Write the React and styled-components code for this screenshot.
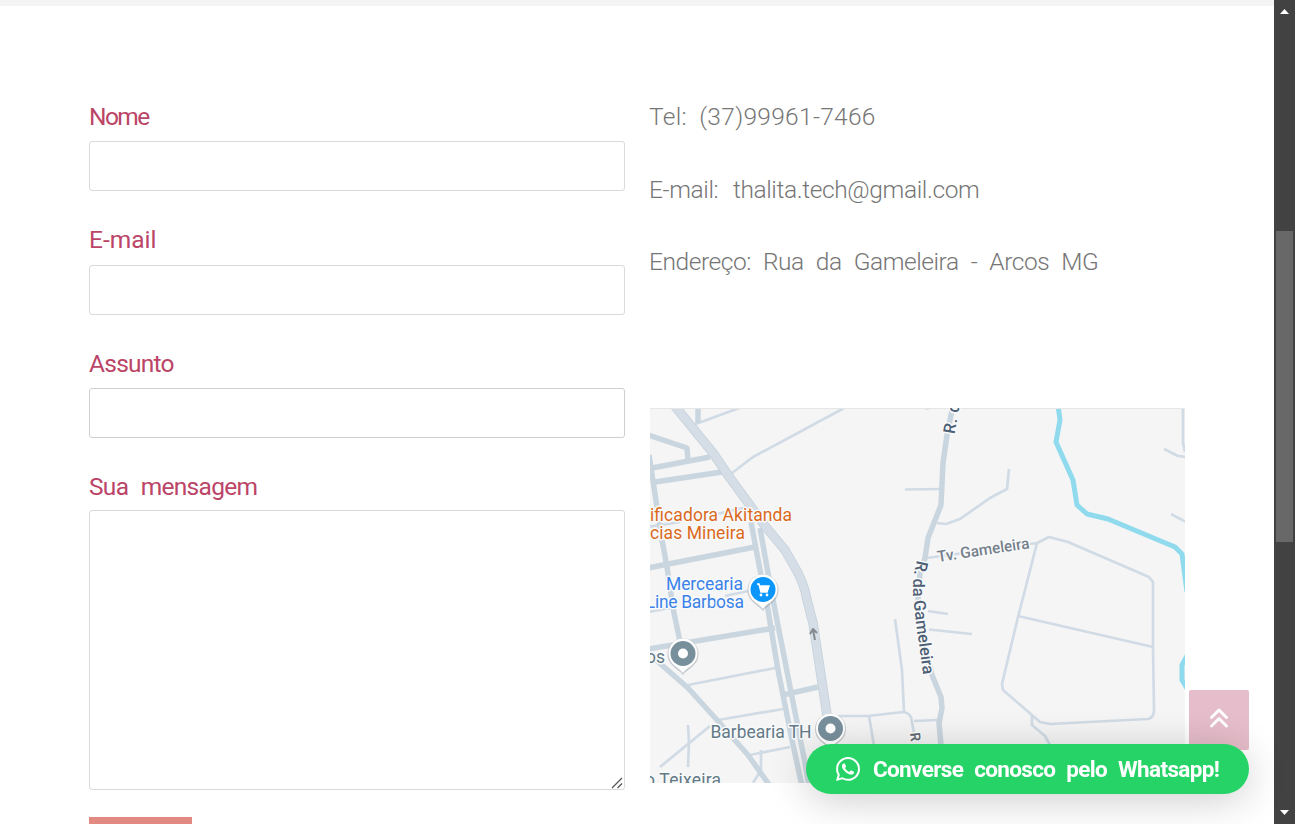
import React from "react";
import styled, { createGlobalStyle } from "styled-components";
import { FaWhatsapp } from "react-icons/fa";

const GlobalStyle = createGlobalStyle`
  *, *::before, *::after { box-sizing: border-box; }
  body { margin: 0; background: #fff; overflow: hidden; }
`;

const displayFont = `Roboto, "Liberation Sans", sans-serif`;

const Page = styled.div`
  display: flex;
  width: 100%;
  height: 824px;
  overflow: hidden;
  background: #fff;
`;

const Content = styled.main`
  flex: 1;
  min-width: 0;
  height: 824px;
  overflow: hidden;
`;

const TopStrip = styled.div`
  height: 6px;
  background: #f4f4f4;
`;

const Columns = styled.div`
  display: grid;
  grid-template-columns: 536px 535px;
  column-gap: 25px;
  align-items: start;
  padding: 92px 0 0 89px;
`;

const Form = styled.form`
  display: flex;
  flex-direction: column;
  align-items: flex-start;
`;

const Field = styled.div`
  position: relative;
  display: flex;
  flex-direction: column;
  width: 100%;
  height: ${(p) => p.$height}px;
`;

const Label = styled.label`
  height: ${(p) => p.$height || 43}px;
  font: 400 24.5px/${(p) => p.$line || 37}px ${displayFont};
  letter-spacing: ${(p) => p.$tracking}px;
  word-spacing: ${(p) => p.$gap || 0}px;
  color: #bb4567;
  white-space: nowrap;
`;

const Input = styled.input`
  width: 100%;
  height: 50px;
  border: 1px solid ${(p) => p.$border || "#dadada"};
  border-radius: 3px;
  background: #fff;
  outline: none;
`;

const TextArea = styled.textarea`
  display: block;
  width: 100%;
  height: 280px;
  border: 1px solid #dadada;
  border-radius: 3px;
  background: #fff;
  outline: none;
  resize: none;
`;

const ResizeGrip = styled.svg`
  position: absolute;
  left: 522px;
  top: 309px;
  width: 12px;
  height: 12px;
  stroke: #555;
  stroke-width: 1.3;
`;

const Submit = styled.button`
  width: 103px;
  height: 50px;
  border: 0;
  background: #e28a82;
`;

const Contact = styled.section`
  display: flex;
  flex-direction: column;
`;

const Line = styled.p`
  margin: 0 0 0 -1px;
  height: 72.5px;
  font: 300 24.5px/37px ${displayFont};
  letter-spacing: ${(p) => p.$tracking}px;
  word-spacing: ${(p) => p.$gap}px;
  color: #767676;
  white-space: nowrap;
`;

const MapImage = styled.svg`
  display: block;
  width: 535px;
  height: 375px;
  margin-top: 92.5px;
  background: #f5f5f5;
  font-family: Roboto, sans-serif;
`;

const ScrollTrack = styled.div`
  display: flex;
  flex-direction: column;
  align-items: center;
  width: 21px;
  height: 824px;
  background: #424242;
`;

const ScrollArrow = styled.svg`
  width: 9px;
  height: 5px;
  margin: ${(p) => (p.$up ? "9px 0 217px" : "268px 0 0")};
  fill: #fff;
`;

const ScrollThumb = styled.div`
  width: 17px;
  height: 311px;
  background: #686868;
`;

const ToTop = styled.a`
  position: fixed;
  left: 1189px;
  top: 690px;
  display: grid;
  place-items: center;
  width: 60px;
  height: 60px;
  padding-bottom: 4px;
  border-radius: 2px;
  background: #e6bdca;
`;

const WhatsAppButton = styled.a`
  position: fixed;
  left: 806px;
  top: 744px;
  display: flex;
  align-items: center;
  gap: 13px;
  width: 443px;
  height: 50px;
  padding-left: 30px;
  border-radius: 25px;
  background: #25d366;
  color: #fff;
  box-shadow: 0 6px 40px rgba(0, 0, 0, 0.2);
  font: 700 22.5px/50px ${displayFont};
  letter-spacing: -0.65px;
  word-spacing: 6px;
  white-space: nowrap;

  svg { width: 24px; height: 28px; flex: none; }
`;

const ButtonText = styled.span`
  height: 50px;
`;

const roads = [
  "M698 404V423", "M648 435L687 448L688 460", "M652 468L710 457", "M655 482L722 472",
  "M649 455L657 507L662 540L667 567L673 608L680 642", "M648 568L755 547",
  "M751 522L760 570L768 610L778 670L792 740L802 786",
  "M760 528L768 573L775 610L792 697L805 763L809 786",
  "M648 649L775 628", "M655 659L688 688L717 720L748 755L770 786", "M783 695L818 687",
  "M953 405L947 435L943 463L941 505L928 538L925 558L920 573L918 600L923 640L932 675L941 697L942 708L939 723L941 745",
];

const lanes = [
  "M693 425L742 407", "M846 407L753 457L732 473", "M648 527L680 522", "M717 514L752 506", "M725 596L748 591", "M648 612L670 608",
  "M688 685L775 668", "M718 720L783 709", "M750 755L790 747", "M688 725L689 742L688 767", "M660 767L710 726",
  "M761 750V770L753 783", "M838 716H868L903 712Q909 713 911 717L914 733", "M869 716L874 746",
  "M895 619L902 670L904 712", "M914 721L938 720", "M905 489.500L940 489", "M1009 469L1007 489L990 498L960 519L946 524L937 523",
  "M927 558L1037 543L1049 537L1068 542L1149 577L1153 582V647L1154 710Q1154 718 1148 719L1050 724L1040 722L1003 690L1002 684L1018 617L1025 590L1037 543",
  "M1018 616L1153 647", "M1032 715V725L1045 736L1050 745", "M928 611L948 614", "M929 629.500L972 634",
  "M1183 405V443L1185 452", "M1164 449L1178 456L1186 457", "M1171 514L1186 522", "M926 409L932 407",
];

const mainRoad = "M674 405L713 453L730 478L752 508L765 526L785 550L798 573Q805 587 807 600L813 623L827 715";

function Pin({ x, y, color, children }) {
  return (
    <g transform={`translate(${x} ${y})`}>
      <path d="M0 21C-4 15-15.500 12-15.500 0A15.500 15.500 0 1 1 15.500 0C15.500 12 4 15 0 21Z" fill="#7c8790" opacity=".4" />
      <path d="M0 19C-4 13-14.500 11-14.500-1A14.500 14.500 0 1 1 14.500-1C14.500 11 4 13 0 19Z" fill="#fff" />
      <circle cy="-.5" r="12.500" fill={color} />
      {children || <circle cy="-.5" r="5" fill="#fff" />}
    </g>
  );
}

function StreetMap() {
  const halo = { stroke: "#f8f9fa", strokeWidth: 3, paintOrder: "stroke", strokeLinejoin: "round" };
  return (
    <MapImage viewBox="650 408 535 375" role="img" aria-label="Mapa">
      <g fill="none" strokeLinejoin="round">
        <g stroke="#d1dbe5" strokeWidth="2.700">{lanes.map((d) => <path key={d} d={d} />)}</g>
        <g stroke="#cad6df" strokeWidth="5.500">{roads.map((d) => <path key={d} d={d} />)}</g>
        <path d={mainRoad} stroke="#c4d0da" strokeWidth="9.500" />
        <path d={mainRoad} stroke="#d5dee6" strokeWidth="8" />
        <g stroke="#90daee" strokeWidth="5">
          <path d="M1058 405L1060 420L1056 442L1073 480L1077 505L1087 514L1108 519L1175 547L1182 554L1187 592" />
          <path d="M1189 652L1182 665V680L1188 690" />
        </g>
        <path d="M650 408.500H1185" stroke="#e6e6e6" />
        <path d="M815 640L813 630M810 634L813 629L817 633" stroke="#858b91" strokeWidth="2" />
      </g>
      <g fontSize="17.500" style={halo}>
        <g fill="#dc6a1c">
          <text x="650" y="521" textLength="142">ificadora Akitanda</text>
          <text x="650" y="538.500" textLength="95">cias Mineira</text>
        </g>
        <g fill="#3b82e8">
          <text x="646" y="607.500" textLength="98">Line Barbosa</text>
          <text x="666" y="590" textLength="77">Mercearia</text>
        </g>
        <g fill="#637986">
          <text x="646" y="662.500" textLength="19">os</text>
          <text x="710.500" y="737.500" textLength="101">Barbearia TH</text>
          <text x="645" y="786" textLength="76">o Teixeira</text>
        </g>
        <g fill="#4d6075" fontWeight="500">
          <path id="gameleira" d="M917 560L913 577L913 597L917 630L924 680" fill="none" stroke="none" />
          <text fontSize="16.500"><textPath href="#gameleira" textLength="116">R. da Gameleira</textPath></text>
          <text fontSize="16.500" transform="translate(954.500 434.500) rotate(-80)" letterSpacing=".8">R. da</text>
          <text fontSize="15.500" fill="#75808a" transform="translate(938 562) rotate(-8.500)" textLength="93">Tv. Gameleira</text>
          <text fontSize="14" fill="#5f6870" transform="translate(910 733) rotate(84)">R</text>
        </g>
      </g>
      <Pin x={763} y={590} color="#0b96fb">
        <path d="M-6-6H-4L-2 2H4L6-4H-3.500" fill="#fff" stroke="#fff" strokeWidth="1.500" />
        <circle cx="-2" cy="5" r="1.400" fill="#fff" /><circle cx="4" cy="5" r="1.400" fill="#fff" />
      </Pin>
      <Pin x={683} y={654} color="#78909c" />
      <Pin x={830.5} y={729} color="#78909c" />
    </MapImage>
  );
}

export default function App() {
  return (
    <>
      <GlobalStyle />
      <Page>
        <Content>
          <TopStrip />
          <Columns>
            <Form>
              <Field $height={124}><Label $tracking={-1.6}>Nome</Label><Input /></Field>
              <Field $height={123}><Label $tracking={0} $line={35}>E-mail</Label><Input /></Field>
              <Field $height={123}><Label $tracking={-0.75}>Assunto</Label><Input $border="#cfcfcf" /></Field>
              <Field $height={349}>
                <Label $height={42} $tracking={-0.7} $gap={7}>Sua mensagem</Label>
                <TextArea />
                <ResizeGrip viewBox="0 0 12 12"><path d="M1 11L11 1M6.500 11L11 6.500" /></ResizeGrip>
              </Field>
              <Submit type="button" aria-label="Enviar" />
            </Form>
            <Contact>
              <Line $tracking={0.3} $gap={6}>Tel: (37)99961-7466</Line>
              <Line $tracking={-0.38} $gap={9}>E-mail: thalita.tech@gmail.com</Line>
              <Line $tracking={-0.44} $gap={6.5}>Endereço: Rua da Gameleira - Arcos MG</Line>
              <StreetMap />
            </Contact>
          </Columns>
        </Content>
        <ScrollTrack>
          <ScrollArrow $up viewBox="0 0 9 5"><path d="M4.500 0L9 5H0Z" /></ScrollArrow>
          <ScrollThumb />
          <ScrollArrow viewBox="0 0 9 5"><path d="M0 0H9L4.500 5Z" /></ScrollArrow>
        </ScrollTrack>
      </Page>
      <ToTop>
        <svg width="20" height="20" viewBox="0 0 20 20" fill="none" stroke="#fff" strokeWidth="3" strokeLinecap="round" strokeLinejoin="round">
          <path d="M2.500 9.500L10 2L17.500 9.500M2.500 18L10 10.500L17.500 18" />
        </svg>
      </ToTop>
      <WhatsAppButton><FaWhatsapp /><ButtonText>Converse conosco pelo Whatsapp!</ButtonText></WhatsAppButton>
    </>
  );
}
